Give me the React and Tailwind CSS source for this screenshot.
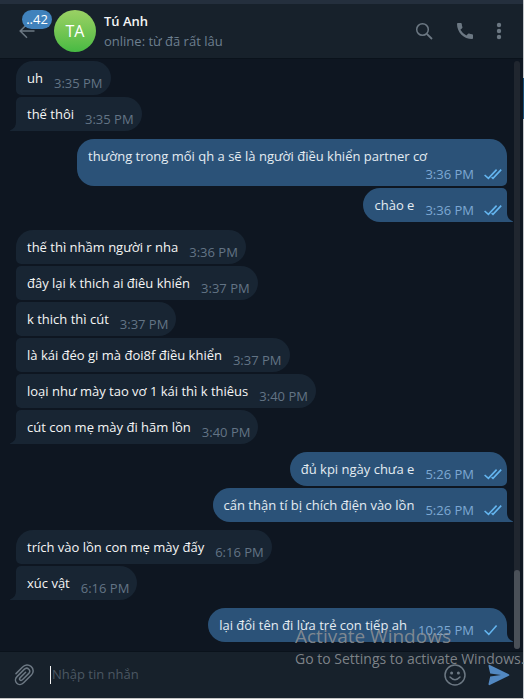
import React from 'react';

const groups = [
    {
        out: false,
        messages: [
            { text: 'uh', time: '3:35 PM' },
            { text: 'thế thôi', time: '3:35 PM' },
        ],
    },
    {
        out: true,
        messages: [
            { text: 'thường trong mối qh a sẽ là người điều khiển partner cơ', time: '3:36 PM', read: true },
            { text: 'chào e', time: '3:36 PM', read: true },
        ],
    },
    {
        out: false,
        messages: [
            { text: 'thế thì nhầm người r nha', time: '3:36 PM' },
            { text: 'đây lại k thich ai điêu khiển', time: '3:37 PM' },
            { text: 'k thich thì cút', time: '3:37 PM' },
            { text: 'là kái đéo gi mà đoi8f điều khiển', time: '3:37 PM' },
            { text: 'loại như mày tao vơ 1 kái thì k thiêus', time: '3:40 PM' },
            { text: 'cút con mẹ mày đi hãm lồn', time: '3:40 PM' },
        ],
    },
    {
        out: true,
        messages: [
            { text: 'đủ kpi ngày chưa e', time: '5:26 PM', read: true },
            { text: 'cẩn thận tí bị chích điện vào lồn', time: '5:26 PM', read: true },
        ],
    },
    {
        out: false,
        messages: [
            { text: 'trích vào lồn con mẹ mày đấy', time: '6:16 PM' },
            { text: 'xúc vật', time: '6:16 PM' },
        ],
    },
    {
        out: true,
        messages: [{ text: 'lại đổi tên đi lừa trẻ con tiếp ah', time: '10:25 PM', read: false }],
    },
];

function Checks({ read }) {
    return (
        <svg className="ml-[10px] h-[13px] w-[18px] shrink-0" viewBox="0 0 18 13" fill="none" stroke="#64b5ef" strokeWidth="1.6">
            {read ? (
                <>
                    <path d="M0.6 7 L4.4 10.4 L12.6 1.6" />
                    <path d="M7.6 9.2 L9 10.4 L17.2 1.6" />
                </>
            ) : (
                <path d="M0.6 6.2 L4.8 10.4 L12.6 1.4" />
            )}
        </svg>
    );
}

function Tail({ out }) {
    return (
        <svg
            className={out ? 'absolute bottom-0 -right-[6px] h-[9px] w-[6px]' : 'absolute bottom-0 -left-[6px] h-[9px] w-[6px]'}
            viewBox="0 0 6 9"
            fill={out ? '#2b5278' : '#182533'}
        >
            <path d={out ? 'M0 0 C0 4 2 7 6 8.4 L6 9 L0 9 Z' : 'M6 0 C6 4 4 7 0 8.4 L0 9 L6 9 Z'} />
        </svg>
    );
}

function Message({ message, out, first, last }) {
    let shape;
    if (out) {
        shape = `self-end rounded-l-[17px] bg-[#2b5278] text-[#e4ecf2] ${first ? 'rounded-tr-[17px]' : 'rounded-tr-[5px]'} ${last ? 'rounded-br-none' : 'rounded-br-[5px]'}`;
    } else {
        shape = `self-start rounded-r-[17px] bg-[#182533] text-[#f5f5f5] ${first ? 'rounded-tl-[17px]' : 'rounded-tl-[5px]'} ${last ? 'rounded-bl-none' : 'rounded-bl-[5px]'}`;
    }

    return (
        <li className={`relative flex max-w-[430px] flex-wrap items-end justify-end pb-[5px] pl-[11px] ${out ? 'pr-[5px]' : 'pr-2'} ${shape}`}>
            <p className="mt-2 mr-auto mb-[3px] pr-[11px] leading-[18px]">{message.text}</p>
            <span className={`flex items-center leading-[13px] ${out ? 'text-[#7da8d3]' : 'text-[#637485]'}`}>
                {message.time}
                {out && <Checks read={message.read} />}
            </span>
            {last && <Tail out={out} />}
        </li>
    );
}

function Header() {
    return (
        <header className="flex h-[54px] shrink-0 items-center bg-[#17212b] pr-[21px] pl-[19px]">
            <button type="button" aria-label="Back" className="relative h-[42px] w-[35px] shrink-0">
                <svg className="absolute top-[13px] left-0 h-4 w-4" viewBox="0 0 16 16" fill="none" stroke="#6c7883" strokeWidth="1.5">
                    <path d="M15.5 8 H1.2 M8 1.2 L1.2 8 L8 14.8" />
                </svg>
                <span className="absolute top-0 left-[3px] h-[19px] w-[30px] rounded-full bg-[#4082bc] text-center text-[13px] leading-[19px] font-medium text-white">
                    ..42
                </span>
            </button>
            <div className="flex h-[42px] w-[42px] shrink-0 items-center justify-center rounded-full bg-linear-to-b from-[#9ad164] to-[#46ba43] text-[16px] font-medium text-white">
                TA
            </div>
            <div className="ml-2 min-w-0 flex-1 leading-[20px]">
                <h1 className="font-semibold text-[#f5f5f5]">Tú Anh</h1>
                <p className="text-[#6d7f8f]">online: từ đã rất lâu</p>
            </div>
            <div className="flex items-center text-[#6c7883]">
                <button type="button" aria-label="Search">
                    <svg className="h-[18px] w-[18px]" viewBox="0 0 18 18" fill="none" stroke="currentColor" strokeWidth="1.5">
                        <circle cx="7.5" cy="7.5" r="5.8" />
                        <path d="M11.8 11.8 L17 17" strokeWidth="1.8" />
                    </svg>
                </button>
                <button type="button" aria-label="Call" className="ml-[23px]">
                    <svg className="h-[18px] w-[18px]" viewBox="0 0 18 18" fill="currentColor">
                        <path d="M1.9 1 H4.8 Q5.7 1 5.8 1.9 Q5.9 3.6 6.4 5.1 Q6.6 5.8 6.1 6.3 L4.4 7.7 Q6.6 11.5 10.4 13.6 L11.8 11.9 Q12.3 11.4 13 11.6 Q14.5 12.1 16.1 12.2 Q17 12.3 17 13.2 V16.1 Q17 17 16.1 17 C7.8 17 1 10.2 1 1.9 Q1 1 1.9 1 Z" />
                    </svg>
                </button>
                <button type="button" aria-label="Menu" className="ml-[22px]">
                    <svg className="h-[18px] w-[6px]" viewBox="0 0 6 18" fill="currentColor">
                        <circle cx="3" cy="3" r="2.2" />
                        <circle cx="3" cy="9" r="2.2" />
                        <circle cx="3" cy="15" r="2.2" />
                    </svg>
                </button>
            </div>
        </header>
    );
}

function Composer() {
    return (
        <form className="flex h-[46px] shrink-0 items-center bg-[#17212b] pr-[13px] pl-[14px]">
            <button type="button" aria-label="Attach" className="text-[#6c7883]">
                <svg className="h-[22px] w-[22px]" viewBox="0 0 22 22" fill="none" stroke="currentColor" strokeWidth="1.5" strokeLinecap="round">
                    <path d="M2 9.6 L8.6 3 C11 0.4 14.6 0.2 17 2.4 C19.8 4.8 19.8 8.6 17.4 11 L9.6 18.8 C7.6 20.8 4.6 21 2.8 19.2 C1 17.4 1 14.6 3 12.6 L10.2 5.4 C11.6 4 13.6 4 14.8 5.2 C16 6.4 16 8.2 14.6 9.6 L8.4 15.8 C7.6 16.6 6.6 16.6 6 16 C5.4 15.4 5.4 14.4 6.2 13.6 L11.6 8.2" />
                </svg>
            </button>
            <span className="ml-[14px] h-[18px] w-px bg-[#f5f5f5]" />
            <input
                type="text"
                aria-label="Nhập tin nhắn"
                placeholder="Nhập tin nhắn"
                className="ml-px h-[18px] min-w-0 flex-1 bg-transparent text-[#f5f5f5] outline-none placeholder:text-[#4b5762]"
            />
            <button type="button" aria-label="Emoji" className="text-[#6c7883]">
                <svg className="h-[22px] w-[22px]" viewBox="0 0 22 22" fill="none" stroke="currentColor" strokeWidth="1.5">
                    <circle cx="11" cy="11" r="10" />
                    <path d="M6 13 Q11 18.4 16 13" strokeLinecap="round" />
                    <circle cx="7.6" cy="9" r="1.5" fill="currentColor" stroke="none" />
                    <circle cx="14.4" cy="9" r="1.5" fill="currentColor" stroke="none" />
                </svg>
            </button>
            <button type="submit" aria-label="Send" className="ml-[22px]">
                <svg className="h-[22px] w-[22px]" viewBox="0 0 22 22" fill="#5288c1">
                    <path d="M0.5 2 Q0.4 0.4 1.8 1 L20.8 10.2 Q22 11 20.8 11.8 L1.8 21 Q0.4 21.6 0.5 20 L2.2 12.6 L13 11 L2.2 9.4 Z" />
                </svg>
            </button>
        </form>
    );
}

function App() {
    return (
        <div className="relative flex min-h-screen overflow-hidden bg-[#0e1621] font-['Open_Sans','Noto_Sans',sans-serif] text-[13px]">
            <div className="flex min-w-0 flex-1 flex-col border-b border-[#c4c4c4]">
                <div className="h-1 shrink-0 bg-[#242f3d]" />
                <Header />
                <main className="flex flex-1 border-y border-[#0a121b] pr-[3px]">
                    <div className="flex flex-1 flex-col gap-2 pt-[2px] pr-[7px] pb-[9px] pl-4">
                        {groups.map((group, i) => (
                            <ul key={i} className="flex flex-col gap-[2px]">
                                {group.messages.map((message, j) => (
                                    <Message
                                        key={j}
                                        message={message}
                                        out={group.out}
                                        first={j === 0}
                                        last={j === group.messages.length - 1}
                                    />
                                ))}
                            </ul>
                        ))}
                    </div>
                    <div className="my-[2px] flex w-[6px] flex-col justify-end rounded-full bg-[#20262f]">
                        <div className="h-[79px] rounded-full bg-[#4a5058]" />
                    </div>
                </main>
                <Composer />
            </div>

            {/* edge of the window behind */}
            <div className="flex w-px flex-col bg-[#c4c8cc]">
                <div className="mt-[78px] h-[41px] bg-[#1b4f78]" />
            </div>

            <div className="pointer-events-none absolute top-[624px] left-[295px] whitespace-nowrap text-[#8a8f94]/90">
                <p className="text-[19px] leading-[24px]">Activate Windows</p>
                <p className="text-[14px] leading-[22px]">Go to Settings to activate Windows.</p>
            </div>
        </div>
    );
}

export default App;
